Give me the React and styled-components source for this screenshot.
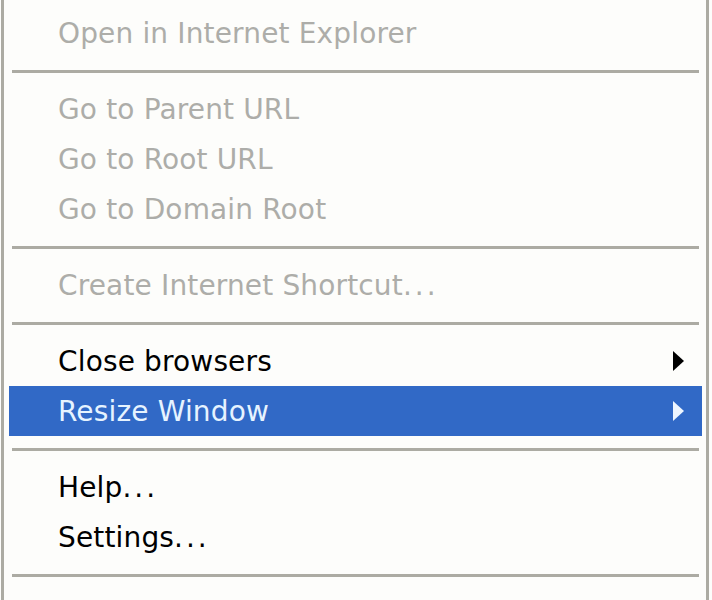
import React from "react";
import styled, { createGlobalStyle } from "styled-components";

const Global = createGlobalStyle`
  html, body { margin: 0; padding: 0; background: #fdfdfb; }
  body { width: 712px; height: 600px; overflow: hidden; }
`;

const Menu = styled.div`
  box-sizing: border-box;
  width: 708px;
  height: 600px;
  margin-left: 1px;
  border-left: 3px solid #acaba3;
  border-right: 3px solid #acaba3;
  background: #fdfdfb;
  padding: 8px 4px 0 5px;
  font-family: "DejaVu Sans", Verdana, sans-serif;
  font-size: 28px;
  letter-spacing: 0.15px;
  overflow: hidden;
`;

const Item = styled.div`
  height: 50px;
  display: flex;
  align-items: center;
  justify-content: space-between;
  padding: 0 17px 0 49px;
  background: ${(p) => (p.$active ? "#3169c6" : "transparent")};
  color: ${(p) => (p.$active ? "#e6f3ff" : p.$disabled ? "#adada9" : "#000")};
`;

const Dots = styled.span`
  letter-spacing: 3px;
`;

const Sep = styled.div`
  height: 26px;
  display: flex;
  align-items: center;
  padding: 0 3px;
  &::after {
    content: "";
    flex: 1;
    height: 3px;
    background: #acaba3;
  }
`;

const Arrow = ({ color }) => (
  <svg width="13" height="20" viewBox="0 0 13 20">
    <path d="M1 0 L12 10 L1 20 Z" fill={color} />
  </svg>
);

export default function App() {
  return (
    <>
      <Global />
      <Menu>
        <Item $disabled>Open in Internet Explorer</Item>
        <Sep />
        <Item $disabled>Go to Parent URL</Item>
        <Item $disabled>Go to Root URL</Item>
        <Item $disabled>Go to Domain Root</Item>
        <Sep />
        <Item $disabled>
          <span>Create Internet Shortcut<Dots>...</Dots></span>
        </Item>
        <Sep />
        <Item>
          Close browsers
          <Arrow color="#000" />
        </Item>
        <Item $active>
          Resize Window
          <Arrow color="#eef6ff" />
        </Item>
        <Sep />
        <Item>
          <span>Help<Dots>...</Dots></span>
        </Item>
        <Item>
          <span>Settings<Dots>...</Dots></span>
        </Item>
        <Sep />
        <Item>
          <span>About<Dots>...</Dots></span>
        </Item>
      </Menu>
    </>
  );
}
